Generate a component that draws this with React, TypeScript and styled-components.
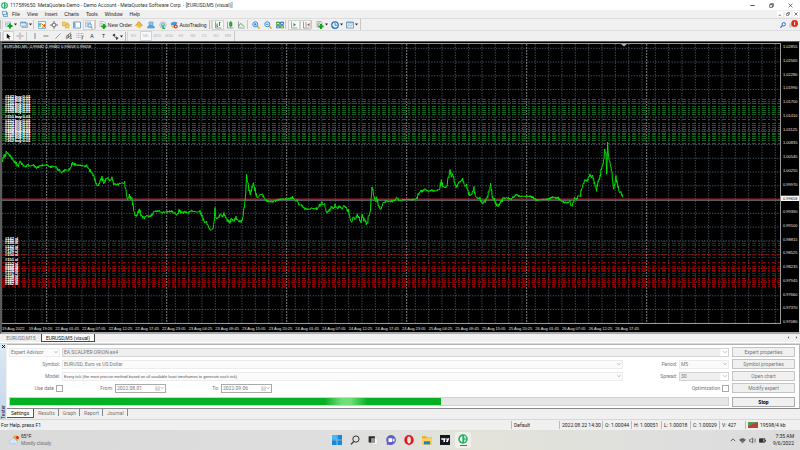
import React, { ReactNode } from 'react';
import styled, { createGlobalStyle, css } from 'styled-components';

const GlobalStyle = createGlobalStyle`
  *, *::before, *::after { box-sizing: border-box; }
  body { margin: 0; background: #f0f0f0; }
  button, input, select { font: inherit; color: inherit; margin: 0; }
`;

const ui = `'Liberation Sans', Arial, sans-serif`;
const panelFont = `Roboto, 'Liberation Sans', sans-serif`;

const App_ = styled.div`
  display: flex;
  flex-direction: column;
  min-height: 100vh;
  background: #f0f0f0;
  color: #222;
  font: 5px/6px ${ui};
`;

/* ---------- window chrome ---------- */
const TitleBar = styled.header`
  display: flex;
  align-items: center;
  height: 10px;
  padding-left: 1px;
  background: #fff;
  gap: 2px;
`;
const TitleText = styled.h1`
  flex: 1;
  margin: 0;
  font: inherit;
  font-family: ${panelFont};
  color: #333;
`;
const PlainButton = styled.button<{ $w?: number; $h?: number }>`
  display: flex;
  align-items: center;
  justify-content: center;
  width: ${(p) => p.$w ?? 12}px;
  height: ${(p) => p.$h ?? 8}px;
  padding: 0;
  border: 0;
  background: none;
`;
const WindowButtons = styled.div`
  display: flex;
  gap: 7px;
  padding-right: 4px;
`;
const MenuBar = styled.nav`
  display: flex;
  align-items: center;
  height: 8px;
  padding-left: 2px;
`;
const MenuItem = styled.button`
  padding: 0 3px;
  border: 0;
  background: none;
  white-space: nowrap;
`;
const MenuItems = styled.div`
  display: flex;
  flex: 1;
  margin-left: 1px;
  gap: 1px;
`;
const ChildButtons = styled.div`
  display: flex;
  gap: 2px;
  padding-right: 1px;
  & > button { background: #fff; }
`;

/* ---------- toolbars ---------- */
const ToolRow = styled.div<{ $h: number }>`
  display: flex;
  align-items: stretch;
  height: ${(p) => p.$h}px;
  border-top: 1px solid #dcdcdc;
`;
const ToolGroup = styled.div`
  display: flex;
  align-items: center;
  border-right: 1px solid #c8c8c8;
`;
const Grip = styled.span`
  width: 3px;
  height: 9px;
  border-left: 1px solid #bbb;
  border-right: 1px solid #d4d4d4;
`;
const Separator = styled.span`
  width: 3px;
  height: 9px;
  border-left: 1px solid #c8c8c8;
`;
const Tool = styled.button<{ $w?: number; $on?: boolean; $muted?: boolean }>`
  display: flex;
  align-items: center;
  justify-content: center;
  gap: 1px;
  width: ${(p) => p.$w ?? 12}px;
  height: 10px;
  padding: 0;
  border: 1px solid ${(p) => (p.$on ? '#d2d2d2' : 'transparent')};
  background: ${(p) => (p.$on ? '#f8f8f8' : 'none')};
  color: ${(p) => (p.$muted ? '#b4b4b4' : '#222')};
  white-space: nowrap;
  flex: none;
`;
const Frames = styled.div`
  display: grid;
  grid-template-columns: repeat(9, 1fr);
  width: 106px;
  font-size: 4px;
  & > button { width: auto; }
`;
const ToolEnd = styled.div`
  display: flex;
  align-items: center;
  gap: 2px;
  margin-left: auto;
  padding-right: 2px;
`;

/* ---------- chart ---------- */
const ChartPane = styled.section`
  display: flex;
  flex-direction: column;
  height: 293px;
  padding: 1px 0 0;
  border: solid #5c5c5c;
  border-width: 1px 1px 2px 2px;
  border-bottom-color: #a8a8a8;
  border-right-color: #d8d8d8;
  background: #000;
  color: #e4e4e4;
  font-size: 4px;
  line-height: 6px;
`;
const ChartTop = styled.div`
  display: flex;
  height: 281px;
`;
const Plot = styled.div`
  position: relative;
  flex: 1;
  min-width: 0;
  border: solid #9a9a9a;
  border-width: 1px 1px 1px 0;
  & > svg { display: block; width: 100%; height: 100%; }
`;
const PlotCaption = styled.p`
  position: absolute;
  left: 2px;
  top: 0;
  margin: 0;
  color: #fff;
  white-space: pre;
`;
const OrderLabel = styled.span<{ $y: number }>`
  position: absolute;
  left: 3px;
  top: ${(p) => p.$y}px;
  color: #fff;
  text-shadow: 0 0 0 #fff;
  white-space: nowrap;
`;
const PriceAxis = styled.ol`
  position: relative;
  display: flex;
  flex-direction: column;
  justify-content: space-between;
  width: 18px;
  height: 281px;
  margin: 1px 0 0;
  padding: 0 0 0 2px;
  list-style: none;
`;
const Price = styled.li<{ $current?: boolean }>`
  height: 6px;
  ${(p) =>
    p.$current &&
    css`
      margin: 0 0 0 -2px;
      padding-left: 2px;
      border-top: 1px solid #f00;
      background: #fff;
      color: #000;
      line-height: 5px;
    `}
`;
const TimeAxis = styled.ol`
  display: grid;
  grid-template-columns: repeat(24, 80fr) 414fr;
  margin: 2px 19px 0 0;
  padding: 0;
  list-style: none;
  & > li { white-space: nowrap; width: 0; }
`;
const ChartTabs = styled.nav`
  display: flex;
  align-items: stretch;
  height: 9px;
  padding-left: 1px;
  border-bottom: 1px solid #fff;
  font-family: ${panelFont};
`;
const ChartTab = styled.button<{ $active?: boolean }>`
  width: ${(p) => (p.$active ? 54 : 40)}px;
  padding: 0;
  border: solid ${(p) => (p.$active ? '#444' : 'transparent')};
  border-width: 0 1px 1px;
  background: ${(p) => (p.$active ? '#fff' : 'none')};
  color: ${(p) => (p.$active ? '#111' : '#777')};
`;
const TabArrows = styled.div`
  display: flex;
  margin-left: auto;
  color: #666;
`;

/* ---------- tester ---------- */
const Tester = styled.section`
  display: flex;
  height: 76px;
  border-top: 1px solid #d8d8d8;
  font-family: ${panelFont};
  color: #777;
`;
const TesterSide = styled.aside`
  display: flex;
  flex-direction: column;
  align-items: center;
  width: 6px;
  background: linear-gradient(#dce8f2, #c4d8ea);
  color: #223;
`;
const SideLabel = styled.span`
  margin-top: auto;
  writing-mode: vertical-rl;
  transform: rotate(180deg);
  line-height: 6px;
`;
const TesterMain = styled.div`
  display: flex;
  flex-direction: column;
  flex: 1;
  min-width: 0;
  margin-left: 1px;
`;
const TesterForm = styled.form`
  display: grid;
  grid-template-columns: minmax(0, 1fr) 63px;
  grid-auto-rows: 10px;
  row-gap: 2px;
  column-gap: 3px;
  height: 65px;
  padding: 2px 4px 0 2px;
  border: solid #b4b4b4;
  border-width: 1px 1px 1px 0;
  border-bottom-color: #888;
  background: #fff;
`;
const FormRow = styled.div`
  display: flex;
  align-items: center;
  min-width: 0;
`;
const Label = styled.label<{ $w: number }>`
  width: ${(p) => p.$w}px;
  flex: none;
  padding-right: 2px;
  text-align: right;
  white-space: nowrap;
`;
const SelectBox = styled.span<{ $w?: number; $gray?: boolean; $gap?: number; $small?: boolean }>`
  display: flex;
  align-items: center;
  ${(p) => (p.$w ? `width: ${p.$w}px; flex: none;` : 'flex: 1; min-width: 0;')}
  height: 9px;
  margin-right: ${(p) => p.$gap ?? 0}px;
  padding-right: 1px;
  border: 1px solid ${(p) => (p.$gray ? '#d4d4d4' : '#ececec')};
  background: ${(p) => (p.$gray ? 'linear-gradient(90deg, #efefef calc(100% - 8px), #fff 0)' : '#fbfbfb')};
  ${(p) => p.$small && `font-family: ${ui}; font-size: 4px; color: #555;`}
  & > select {
    flex: 1;
    min-width: 0;
    height: 7px;
    padding: 0 1px;
    border: 0;
    background: none;
    appearance: none;
    line-height: 7px;
  }
`;
const Check = styled.input`
  appearance: none;
  flex: none;
  width: 7px;
  height: 7px;
  border: 1px solid #aaa;
  background: #fff;
`;
const DateBox = styled.span`
  display: flex;
  align-items: center;
  flex: none;
  width: 51px;
  height: 9px;
  border: 1px solid #aaa;
  & > input {
    flex: 1;
    min-width: 0;
    height: 7px;
    padding: 0 1px;
    border: 0;
    background: none;
  }
`;
const Spring = styled.span`
  flex: 1;
`;
const FormButton = styled.button<{ $strong?: boolean }>`
  height: 10px;
  padding: 0;
  border: 1px solid #c4c4c4;
  background: #f0f0f0;
  ${(p) => p.$strong && 'color: #000; font-weight: 700; border-color: #aaa;'}
`;
const ProgressRow = styled.div`
  display: contents;
  & > * { margin-top: 2px; }
`;
const Track = styled.div`
  height: 9px;
  border: 1px solid #d0d0d0;
  background: #e6e6e6;
`;
const Bar = styled.div`
  width: 60%;
  height: 7px;
  background: linear-gradient(90deg, #06b025 73%, #70df7a 77%, #70df7a 79%, #06b025 83%);
`;
const TesterTabs = styled.nav`
  display: flex;
  height: 9px;
`;
const TesterTab = styled.button<{ $active?: boolean }>`
  height: 7px;
  margin-left: 1px;
  padding: 0 3px;
  border: 0;
  border-right: 1px solid #888;
  background: none;
  ${(p) =>
    p.$active &&
    `height: 9px; margin: 0; padding: 0 4px; background: #fff; color: #111;
     border: solid #555; border-width: 0 1px 1px 0;`}
`;

/* ---------- status ---------- */
const StatusBar = styled.footer`
  display: flex;
  align-items: center;
  height: 11px;
  border-top: 1px solid #d8d8d8;
  padding-left: 1px;
  font-family: ${panelFont};
`;
const StatusCell = styled.span<{ $w: number }>`
  display: flex;
  align-items: center;
  gap: 2px;
  width: ${(p) => p.$w}px;
  height: 8px;
  padding-left: 2px;
  border-left: 1px solid #bbb;
  white-space: nowrap;
`;

/* ---------- taskbar ---------- */
const Taskbar = styled.footer`
  display: grid;
  grid-template-columns: 1fr auto 1fr;
  align-items: center;
  height: 20px;
  background: linear-gradient(90deg, #dadada, #dedede 40%, #e3e3da 60%, #dedede 85%, #dcdcdc);
`;
const Weather = styled.button`
  display: flex;
  align-items: center;
  gap: 2px;
  padding: 0 0 0 9px;
  border: 0;
  background: none;
  text-align: left;
`;
const Stack = styled.span`
  display: flex;
  flex-direction: column;
  line-height: 7px;
  & > small { font-size: 5px; color: #666; }
`;
const Dock = styled.div`
  display: flex;
  gap: 2px;
`;
const DockItem = styled.button<{ $active?: boolean }>`
  display: flex;
  flex-direction: column;
  align-items: center;
  justify-content: center;
  width: 16px;
  height: 16px;
  padding: 0;
  border: 0;
  border-radius: 2px;
  background: ${(p) => (p.$active ? '#f0f0ea' : 'none')};
  ${(p) =>
    p.$active &&
    css`
      &::after {
        content: '';
        width: 7px;
        height: 1px;
        margin-top: 1px;
        background: #2a7f8c;
      }
    `}
`;
const Tray = styled.div`
  display: flex;
  align-items: center;
  justify-content: flex-end;
  gap: 3px;
  padding-right: 6px;
`;
const Clock = styled.time`
  width: 25px;
  text-align: right;
  line-height: 7px;
  font-family: ${panelFont};
`;

/* ---------- icons ---------- */
const Ico = ({ s = 8, children }: { s?: number; children: ReactNode }) => (
  <svg width={s} height={s} viewBox="0 0 16 16" fill="none" aria-hidden="true">
    {children}
  </svg>
);
const Caret = () => (
  <svg width="3" height="3" viewBox="0 0 6 6" aria-hidden="true"><path d="M0 1h6L3 5z" fill="#222" /></svg>
);
const Chevron = () => (
  <svg width="4" height="4" viewBox="0 0 8 8" fill="none" aria-hidden="true"><path d="M1 2.5 4 5.5 7 2.5" stroke="#999" strokeWidth="1.4" /></svg>
);
const Plus = ({ x = 11, y = 11 }: { x?: number; y?: number }) => (
  <path d={`M${x} ${y - 5}v10M${x - 5} ${y}h10`} stroke="#12a512" strokeWidth="4" />
);
const MetaLogo = ({ s = 8 }: { s?: number }) => (
  <Ico s={s}>
    <circle cx="8" cy="8" r="7.6" fill="#1fae62" />
    <path d="M7 3C4 4 3 6 3 8s1 4 4 5z M10 2.5v11c2-1 3-3 3-5.500s-1-4.500-3-5.500z" fill="#fff" />
    <path d="M10 6h2v4h-2z" fill="#1fae62" />
  </Ico>
);
const Lens = ({ minus }: { minus?: boolean }) => (
  <Ico>
    <path d="m10 10 5 5" stroke="#d8a520" strokeWidth="3" />
    <circle cx="6.500" cy="6.500" r="5" fill="#dcefff" stroke="#3a8ede" strokeWidth="2" />
    <path d={minus ? 'M4 6.500h5' : 'M4 6.500h5M6.500 4v5'} stroke="#2060b0" strokeWidth="1.500" />
  </Ico>
);
const icons = {
  newChart: <Ico><path d="M1 2h10v9H1z" fill="#eef4fa" stroke="#7f9fb8" /><path d="M3 8V5m2 2V4m3 3V3" stroke="#4a8" /><Plus x={10} y={10} /></Ico>,
  profiles: <Ico><path d="M4 4h11v9H4z" fill="#bcd8ee" stroke="#5b88ad" /><path d="M1 2h11v8H1z" fill="#e8f2fa" stroke="#5b88ad" /><path d="M1 3.500h11" stroke="#4d8cc4" strokeWidth="2" /></Ico>,
  market: <Ico><path d="M1 1h14v14H1z" fill="#f7fbff" stroke="#5aa0d8" strokeWidth="1.500" /><path d="M4 12V5l-2 2m2-2 2 2" stroke="#1fa51f" strokeWidth="2" /><path d="m7 5 6 6m0-5v6H8" stroke="#e06a20" strokeWidth="2" /></Ico>,
  crosshair: <Ico><circle cx="8" cy="8" r="4" stroke="#666" strokeWidth="1.500" /><path d="M8 0v6m0 4v6M0 8h6m4 0h6" stroke="#555" strokeWidth="1.500" /></Ico>,
  navigator: <Ico><path d="M1 2h5l1 2h5v6H1z" fill="#f7d35c" stroke="#c79a20" /><path d="m10.500 5 1.500 3 3.500.4-2.400 2.400.6 3.700-3.200-1.700-3.200 1.700.6-3.700-2.400-2.400L9 8z" fill="#ffe04a" stroke="#c08a10" /></Ico>,
  terminal: <Ico><path d="M1 2h14v12H1z" fill="#fff" stroke="#4d86b8" strokeWidth="1.500" /><path d="M2 3h3v10H2z" fill="#6fa8d8" /></Ico>,
  tester: <Ico><path d="M1 2h10v10H1z" fill="#e5eff8" stroke="#7796b0" /><path d="M3 5h6M3 8h4" stroke="#889" /><circle cx="9.500" cy="9" r="3.500" fill="#d7ecff" stroke="#4a88c0" strokeWidth="1.500" /><path d="m12 12 3 3" stroke="#d09c20" strokeWidth="2.500" /></Ico>,
  order: <Ico><path d="M2 1h8l3 3v7H2z" fill="#f5f8fb" stroke="#889" /><path d="M4 5h5M4 8h3" stroke="#789" /><Plus x={10} y={11} /></Ico>,
  editor: <Ico><path d="M8 1 15 9l-6 5-8-5z" fill="#f3bd2c" stroke="#bf8410" strokeWidth="1.200" /><path d="m2 9 7 5 5-4" stroke="#fff0a0" strokeWidth="1.500" /></Ico>,
  community: <Ico><path d="M4 2h8v7H4z" fill="#8fc6f2" stroke="#3c84c6" /><path d="M1 14c0-4 3-5 7-5s7 1 7 5z" fill="#5da6e2" stroke="#3c84c6" /></Ico>,
  signals: <Ico><circle cx="8" cy="8" r="6.500" stroke="#9cb8cc" strokeWidth="1.500" /><circle cx="8" cy="8" r="3.500" stroke="#4d9cd0" strokeWidth="1.500" /><path d="M8 7v8h4" stroke="#2faa3c" strokeWidth="2.500" /></Ico>,
  auto: <Ico><path d="M1 6c2-5 11-6 14-2l-3 4H3z" fill="#4a9ad8" /><path d="M2 8h9l-2 6-6-1z" fill="#f2c23a" /><circle cx="11.500" cy="11" r="4" fill="#e02818" /><path d="M10 9.500h3v3h-3z" fill="#fff" /></Ico>,
  bars: <Ico><path d="M3 1v13h12" stroke="#666" strokeWidth="1.300" /><path d="M6 5v7m0-1h2M11 2v8m0-7h2" stroke="#1b9b2e" strokeWidth="2" /></Ico>,
  candles: <Ico><path d="M3 1v13h12" stroke="#777" strokeWidth="1.300" /><path d="M9.500 0v13" stroke="#157f25" strokeWidth="1.500" /><path d="M7 3h5v7H7z" fill="#25b53a" stroke="#157f25" /></Ico>,
  line: <Ico><path d="M3 1v13h12" stroke="#777" strokeWidth="1.300" /><path d="M3 11 7 5l4 3 4 3" stroke="#2ca83c" strokeWidth="1.600" /></Ico>,
  tiles: <Ico><path d="M1 2h6v5H1zM9 9h6v5H9z" fill="#4bb13f" stroke="#26762a" /><path d="M9 2h6v5H9zM1 9h6v5H1z" fill="#3d8fe0" stroke="#1d4f92" /><path d="M2 5h4M10 5h4M2 12h4m4 0h4" stroke="#fff" strokeWidth="1.500" /></Ico>,
  scroll: <Ico><path d="M3 1v13h12" stroke="#777" strokeWidth="1.300" /><path d="m7 4 5 3.500L7 11z" fill="#23a337" /></Ico>,
  shift: <Ico><path d="M3 1v13h12M8 2v10" stroke="#667" strokeWidth="1.300" /><path d="m15 4-5 3.500 5 3.500z" fill="#d2592a" /></Ico>,
  indicators: <Ico><path d="M2 1h8l2 3v8H2z" fill="#e2e8ec" stroke="#778" /><path d="M4 9c1-6 4-6 4-4" stroke="#555" /><Plus x={10} y={11} /></Ico>,
  periods: <Ico><circle cx="8" cy="8" r="6.500" fill="#eef6fd" stroke="#1f72c4" strokeWidth="2.500" /><path d="M8 4v4.500h4" stroke="#345" strokeWidth="1.300" /></Ico>,
  templates: <Ico><path d="M1 2h14v12H1z" fill="#e7f1f9" stroke="#5487b1" strokeWidth="1.500" /><path d="M1 3.500h14" stroke="#5a9bd0" strokeWidth="2" /><path d="m3 11 3-4 3 3 4-3" stroke="#667" /></Ico>,
  cursor: <Ico s={7}><path d="M4 1v12l3-3 2 5 2-1-2-5h4z" fill="#111" /></Ico>,
  cross: <Ico><path d="M8 1v6m0 2v6M1 8h6m2 0h6" stroke="#777" strokeWidth="1.300" /></Ico>,
  vline: <Ico><path d="M8 2v12" stroke="#666" strokeWidth="1.500" /></Ico>,
  hline: <Ico><path d="M3 8h10" stroke="#555" strokeWidth="1.500" /></Ico>,
  trend: <Ico><path d="M3 13 13 3" stroke="#666" strokeWidth="1.300" /></Ico>,
  channel: <Ico><path d="M1 10 12 1M2 14 14 5M4 7v6m3-8v7m4-9v6M9 10h5m-5 3h5" stroke="#444" strokeWidth="1.200" /></Ico>,
  fibo: <Ico><path d="M1 3h14M1 7h14M1 11h9" stroke="#888" strokeDasharray="2 1" strokeWidth="1.200" /><path d="M12 9v6m0-6h3m-3 3h2" stroke="#555" strokeWidth="1.300" /></Ico>,
  arrows: <Ico s={7}><path d="m1 5 4-4 3 4-3 3z" fill="#333" /><path d="m5 8 5 3m0-2 4 3-4 3z" stroke="#333" fill="#333" strokeWidth="1.500" /></Ico>,
};

type ToolDef = { id: string; icon?: ReactNode; text?: string; w?: number; on?: boolean; caret?: boolean; sep?: boolean };
const mainTools: ToolDef[] = [
  { id: 'New chart', icon: icons.newChart, w: 15, caret: true },
  { id: 'Profiles', icon: icons.profiles, w: 15, caret: true },
  { id: 's1', sep: true },
  { id: 'Market watch', icon: icons.market },
  { id: 'Data window', icon: icons.crosshair },
  { id: 'Navigator', icon: icons.navigator, w: 11 },
  { id: 'Terminal', icon: icons.terminal },
  { id: 'Strategy tester', icon: icons.tester, on: true },
  { id: 's2', sep: true },
  { id: 'New Order', icon: icons.order, text: 'New Order', w: 35 },
  { id: 'MetaEditor', icon: icons.editor },
  { id: 'Community', icon: icons.community },
  { id: 'Signals', icon: icons.signals, w: 11 },
  { id: 'AutoTrading', icon: icons.auto, text: 'AutoTrading', w: 41 },
];
const chartTools: ToolDef[] = [
  { id: 'Bar chart', icon: icons.bars, on: true },
  { id: 'Candlesticks', icon: icons.candles, w: 11 },
  { id: 'Line chart', icon: icons.line },
  { id: 's1', sep: true },
  { id: 'Zoom in', icon: <Lens /> },
  { id: 'Zoom out', icon: <Lens minus /> },
  { id: 'Tile windows', icon: icons.tiles, w: 11 },
  { id: 's2', sep: true },
  { id: 'Auto scroll', icon: icons.scroll, on: true },
  { id: 'Chart shift', icon: icons.shift, w: 11, on: true },
  { id: 's3', sep: true },
  { id: 'Indicators', icon: icons.indicators, w: 15, caret: true },
  { id: 'Periods', icon: icons.periods, w: 15, caret: true },
  { id: 'Templates', icon: icons.templates, w: 16, caret: true },
];
const drawTools: ToolDef[] = [
  { id: 'Cursor', icon: icons.cursor, w: 11, on: true },
  { id: 'Crosshair', icon: icons.cross },
  { id: 's1', sep: true },
  { id: 'Vertical line', icon: icons.vline, w: 11 },
  { id: 'Horizontal line', icon: icons.hline },
  { id: 'Trendline', icon: icons.trend, w: 11 },
  { id: 'Channel', icon: icons.channel, w: 11 },
  { id: 'Fibonacci', icon: icons.fibo },
  { id: 'Text', text: 'A' },
  { id: 'Text label', text: 'T', w: 11 },
  { id: 'Arrows', icon: icons.arrows, w: 16, caret: true },
];
const Tools = ({ items }: { items: ToolDef[] }) => (
  <>
    {items.map((t) =>
      t.sep ? (
        <Separator key={t.id} />
      ) : (
        <Tool key={t.id} $w={t.w} $on={t.on} aria-label={t.id} aria-pressed={!!t.on}>
          {t.icon}
          {t.text}
          {t.caret && <Caret />}
        </Tool>
      ),
    )}
  </>
);

/* ---------- chart data: [offset x, offset y, x/y pairs at triple scale] ---------- */
const raw: [number, number, number[]][] = [
  [0, 85, [6,222,20,200,24,203,30,210,38,222,46,230,54,240,60,226,68,236,75,243,82,236,90,240,100,238,108,246,118,241,130,237,142,238,150,243,160,241,170,245,180,256,188,260,196,252,205,252,212,246,218,231,228,237,240,238,250,240,260,241,268,252,275,260,282,272,290,295,294,302,300,285,306,276,312,290,318,280,324,275,330,285,336,277,342,293,350,297,358,293,366,292,374,290,378,315,382,340,388,330,396,343,400,365,404,388,410,390,414,380,418,372,424,388,432,396,440,390,448,392,454,388,462,377,475,375,485,380,500,378,515,376,525,382,533,388,538,371,545,382,555,378,565,380,575,375,590,378,600,378,608,395,612,408,620,410,625,422,630,432,638,430,642,410,645,372,648,395,655,398,662,385,668,392,672,385,680,400,688,410,695,398,702,405,708,395,715,405,722,408,728,398,732,370,736,340,740,272,745,300,750,330,756,305,760,292]],
  [200, 80, [166,330,172,352,180,342,188,340,195,355,205,362,215,362,225,360,235,356,250,354,262,354,277,350,285,358,292,360,298,372,305,372,312,382,320,385,335,382,345,385,355,380,366,366,374,374,380,395,388,390,395,378,402,385,405,372,412,385,418,375,425,385,432,375,440,385,446,392,450,415,455,425,460,408,466,415,472,402,478,412,482,428,487,405,494,420,502,430,506,405,510,400,513,360,516,318,522,345,526,360,530,352,536,372,542,385,550,365,560,360,570,363,585,357,590,350,600,360,608,357,620,356,635,356,645,355]],
  [400, 80, [50,355,55,340,62,332,75,325,85,332,95,328,108,330,118,325,124,302,130,318,140,320,145,290,150,266,154,290,158,278,164,305,170,318,176,305,182,300,188,298,194,315,200,312,204,335,214,345,222,322,226,345,232,352,240,352,247,368,255,362,262,350,268,325,272,315,278,350,284,358,292,378,300,368,310,352,320,350,330,355,340,348,350,342,360,346,375,346,390,346,400,350,415,358,430,355,445,355,460,349,475,352,485,360,500,366,510,362,515,380,520,365,524,350,530,356,535,345,540,348,543,330,550,312,555,298,562,300,566,288,570,282,578,290,584,308,588,328,594,305,600,290,603,270,608,255,612,240,614,208,618,220,620,285,623,185,626,230,630,250,636,275,640,325,648,288,652,312,658,335,663,335,668,350,670,356]],
];
const PLOT_X = 2;
const PLOT_Y = 43;
const anchors = raw.flatMap(([ox, oy, v]) => {
  const out: [number, number][] = [];
  for (let i = 0; i < v.length; i += 2) out.push([ox + v[i] / 3 - PLOT_X, oy + v[i + 1] / 3 - PLOT_Y]);
  return out;
});
const pricePath = (() => {
  let seed = 7;
  const rnd = () => ((seed = (seed * 16807) % 2147483647) / 2147483647);
  const pts: string[] = [];
  for (let i = 1; i < anchors.length; i++) {
    const [x0, y0] = anchors[i - 1];
    const [x1, y1] = anchors[i];
    const n = Math.max(1, Math.round((x1 - x0) / 0.5));
    const amp = Math.min(3, 0.8 + Math.abs(y1 - y0) * 0.3);
    for (let k = 0; k < n; k++) {
      const y = y0 + ((y1 - y0) * k) / n + (k % 2 ? 1 : -1) * rnd() * amp;
      pts.push(`${(x0 + ((x1 - x0) * k) / n).toFixed(2)} ${y.toFixed(2)}`);
    }
  }
  return 'M' + pts.join('L');
})();

const buyLevels = [98, 100, 102, 105, 107, 109, 111, 113, 118, 122, 124, 126, 128, 130, 132, 133, 135, 137, 139, 142];
const stopLevels = [240, 242, 244, 248, 250, 253, 256, 261, 265, 267, 269, 270, 272, 274, 277, 279, 281, 283, 285];
const ticket = (i: number, shift: number) => (i === 0 ? 142 : 142 + shift + i);
const grid = (n: number) => Array.from({ length: n }, (_, i) => i);
const daySeparators = [46.7, 166.7, 286.7, 406.7, 526.7, 646.7];

const prices = ['1.02855','1.02565','1.02280','1.01990','1.01700','1.01410','1.01125','1.00835','1.00545','1.00255','0.99970','0.99658','0.99390','0.99100','0.98815','0.98525','0.98235','0.97945','0.97660','0.97370','0.97080'];
const times = ['19 Aug 2022','19 Aug 19:20','22 Aug 01:45','22 Aug 07:05','22 Aug 12:25','22 Aug 17:45','22 Aug 23:05','23 Aug 04:25','23 Aug 09:45','23 Aug 15:05','23 Aug 20:25','24 Aug 01:45','24 Aug 07:05','24 Aug 12:25','24 Aug 17:45','24 Aug 23:05','25 Aug 04:25','25 Aug 09:45','25 Aug 15:05','25 Aug 20:25','26 Aug 01:45','26 Aug 07:05','26 Aug 12:25','26 Aug 17:45'];

const Chart = () => (
  <ChartPane aria-label="EURUSD chart">
    <ChartTop>
      <Plot>
        <svg viewBox="0 0 778 279" preserveAspectRatio="none" role="img" aria-label="EURUSD M5 price">
          {grid(21).map((i) => (
            <path key={i} d={`M0 ${4.300 + i * 13.75}H778`} stroke="#505c69" strokeDasharray="1.300 1.400" strokeWidth="0.9" />
          ))}
          {grid(59).map((i) => (
            <path key={i} d={`M${i * 13.333} 0V279`} stroke="#505c69" strokeDasharray="1.300 1.400" strokeWidth="0.9" />
          ))}
          {daySeparators.map((x) => (
            <path key={x} d={`M${x - PLOT_X} 0V279`} stroke="#909090" strokeDasharray="2 1" strokeWidth="0.9" />
          ))}
          {buyLevels.map((y) => (
            <path key={y} d={`M0 ${y - PLOT_Y + 0.5}H778`} stroke="#0e6416" strokeDasharray="4 2 2 2" />
          ))}
          {stopLevels.map((y) => (
            <path key={y} d={`M0 ${y - PLOT_Y + 0.5}H778`} stroke="#860000" strokeDasharray="4 2 2 2" />
          ))}
          <path d="M0 156.500H778" stroke="#565c64" />
          <path d="M0 155.300H778" stroke="#b01822" strokeWidth="1.500" />
          <path d={pricePath} stroke="#00e400" strokeWidth="1" fill="none" />
          <path d="M619 0h6l-3 2.500z" fill="#9fb4c4" />
        </svg>
        <PlotCaption>{'EURUSD,M5  0.99682 0.99682 0.99658 0.99658'}</PlotCaption>
        {buyLevels.map((y, i) => (
          <OrderLabel key={y} $y={y - PLOT_Y - 5}>{`#${ticket(i, 1)} buy 0.01`}</OrderLabel>
        ))}
        {stopLevels.map((y, i) => (
          <OrderLabel key={y} $y={y - PLOT_Y - 5}>{`#${ticket(i, 2)} sl`}</OrderLabel>
        ))}
      </Plot>
      <PriceAxis>
        {prices.map((p) => (
          <Price key={p} $current={p === '0.99658'}>{p}</Price>
        ))}
      </PriceAxis>
    </ChartTop>
    <TimeAxis>
      {times.map((t) => (
        <li key={t}>{t}</li>
      ))}
    </TimeAxis>
  </ChartPane>
);

type SelectProps = { id: string; value: string; w?: number; gray?: boolean; gap?: number; small?: boolean };
const Select = ({ id, value, w, gray, gap, small }: SelectProps) => (
  <SelectBox $w={w} $gray={gray} $gap={gap} $small={small}>
    <select id={id} aria-label={id} defaultValue={value}>
      <option>{value}</option>
    </select>
    <Chevron />
  </SelectBox>
);
const DateField = ({ id, value }: { id: string; value: string }) => (
  <DateBox>
    <input id={id} type="text" defaultValue={value} />
    <PlainButton type="button" aria-label="Open calendar" $w={11} $h={7}>
      <Ico s={5}><path d="M1 2h14v12H1zM1 6h14M5 6v8m5-8v8M1 10h14" stroke="#aaa" strokeWidth="1.200" /></Ico>
      <Chevron />
    </PlainButton>
  </DateBox>
);

const TesterPanel = () => (
  <Tester aria-label="Strategy tester">
    <TesterSide>
      <PlainButton aria-label="Close tester" $w={5} $h={4}>
        <svg width="3" height="3" viewBox="0 0 6 6"><path d="m0 0 6 6M6 0 0 6" stroke="#111" strokeWidth="2" /></svg>
      </PlainButton>
      <SideLabel>Tester</SideLabel>
    </TesterSide>
    <TesterMain>
      <TesterForm onSubmit={(e) => e.preventDefault()}>
        <FormRow>
          <Select id="Program type" value="Expert Advisor" w={51} gap={2} />
          <Select id="Expert" value="EA SCALPER ORION.ex4" gray />
        </FormRow>
        <FormButton type="button">Expert properties</FormButton>
        <FormRow>
          <Label $w={53} htmlFor="Symbol">Symbol:</Label>
          <Select id="Symbol" value="EURUSD, Euro vs US Dollar" />
          <Label $w={56} htmlFor="Period">Period:</Label>
          <Select id="Period" value="M5" w={50} />
        </FormRow>
        <FormButton type="button">Symbol properties</FormButton>
        <FormRow>
          <Label $w={53} htmlFor="Model">Model:</Label>
          <Select id="Model" value="Every tick (the most precise method based on all available least timeframes to generate each tick)" small />
          <Label $w={56} htmlFor="Spread">Spread:</Label>
          <Select id="Spread" value="30" w={50} gray />
        </FormRow>
        <FormButton type="button">Open chart</FormButton>
        <FormRow>
          <Label $w={47} htmlFor="use-date">Use date</Label>
          <Check type="checkbox" id="use-date" />
          <Label $w={52} htmlFor="from">From:</Label>
          <DateField id="from" value="2022.08.01" />
          <Label $w={55} htmlFor="to">To:</Label>
          <DateField id="to" value="2022.09.06" />
          <Spring />
          <Label $w={40} htmlFor="optimization">Optimization</Label>
          <Check type="checkbox" id="optimization" />
        </FormRow>
        <FormButton type="button">Modify expert</FormButton>
        <ProgressRow>
          <Track role="progressbar" aria-valuenow={60} aria-label="Test progress"><Bar /></Track>
          <FormButton type="button" $strong>Stop</FormButton>
        </ProgressRow>
      </TesterForm>
      <TesterTabs>
        {['Settings', 'Results', 'Graph', 'Report', 'Journal'].map((t, i) => (
          <TesterTab key={t} $active={i === 0}>{t}</TesterTab>
        ))}
      </TesterTabs>
    </TesterMain>
  </Tester>
);

const dock: { id: string; icon: ReactNode; active?: boolean }[] = [
  { id: 'Start', icon: <Ico s={10}><path d="M0 0h7.500v7.500H0zM8.500 0H16v7.500H8.500zM0 8.500h7.500V16H0zM8.500 8.500H16V16H8.500z" fill="#1688dc" /><path d="M0 0h7.500v7.500H0z" fill="#4cb8f0" /></Ico> },
  { id: 'Search', icon: <Ico s={10}><circle cx="9.500" cy="6.500" r="5" stroke="#333" strokeWidth="1.600" /><path d="m6 10.500-4.500 4.500" stroke="#333" strokeWidth="2" /></Ico> },
  { id: 'Task view', icon: <Ico s={10}><path d="M5 5h10v10H5z" fill="#fafafa" stroke="#ccc" /><path d="M1 2h10v10H1z" fill="#2b2b2b" /><path d="M5 5h6v7H5z" fill="#9a9a9a" /></Ico> },
  { id: 'Chat', icon: <Ico s={10}><path d="M8 0a8 8 0 1 1-4 15l-3 1 .5-4A8 8 0 0 1 8 0z" fill="#5b5fc7" /><path d="M4 5h6v6H4zM11 7l2.500-2v6L11 9z" fill="#fff" /></Ico> },
  { id: 'Opera', icon: <Ico s={10}><ellipse cx="8" cy="8" rx="7.500" ry="8" fill="#e8131f" /><ellipse cx="8" cy="8" rx="3" ry="5.500" fill="#e8e8e2" /></Ico> },
  { id: 'Explorer', icon: <Ico s={10}><path d="M0 2h6l2 2h8v11H0z" fill="#e9a91a" /><path d="M0 5h16v10H0z" fill="#ffd35a" /><path d="M3 10h10v5H3z" fill="#1f7fd0" /></Ico> },
  { id: 'TradingView', icon: <Ico s={10}><path d="M0 0h16v16H0z" fill="#131722" /><path d="M2 5h6v6H5.500V7.500H2zM12 5h3l-2.500 6h-3z" fill="#fff" /><circle cx="9.800" cy="6.300" r="1.300" fill="#fff" /></Ico> },
  { id: 'MetaTrader', icon: <MetaLogo s={10} />, active: true },
];

export default function App() {
  return (
    <App_>
      <GlobalStyle />
      <TitleBar>
        <MetaLogo s={7} />
        <TitleText>117589650: MetaQuotes-Demo - Demo Account - MetaQuotes Software Corp. - [EURUSD,M5 (visual)]</TitleText>
        <WindowButtons>
          <PlainButton aria-label="Minimize"><Ico s={5}><path d="M1 8h14" stroke="#222" strokeWidth="2.500" /></Ico></PlainButton>
          <PlainButton aria-label="Restore"><Ico s={5}><path d="M2 5h9v9H2zM5 5V2h9v9h-3" stroke="#222" strokeWidth="2" /></Ico></PlainButton>
          <PlainButton aria-label="Close"><Ico s={5}><path d="m2 2 12 12M14 2 2 14" stroke="#222" strokeWidth="2" /></Ico></PlainButton>
        </WindowButtons>
      </TitleBar>
      <MenuBar>
        <Ico s={6}><path d="M4 5h11v10H4z" fill="#cfe3f5" stroke="#4c88bd" strokeWidth="2" /><path d="M1 1h11v8H1z" fill="#eaf3fb" stroke="#4c88bd" strokeWidth="2" /></Ico>
        <MenuItems>
          {['File', 'View', 'Insert', 'Charts', 'Tools', 'Window', 'Help'].map((m) => (
            <MenuItem key={m}>{m}</MenuItem>
          ))}
        </MenuItems>
        <ChildButtons>
          <PlainButton aria-label="Minimize chart" $w={6} $h={6}><Ico s={4}><path d="M2 13h10" stroke="#556" strokeWidth="3" /></Ico></PlainButton>
          <PlainButton aria-label="Restore chart" $w={6} $h={6}><Ico s={4}><path d="M2 6h8v8H2zM6 5V2h8v8h-3" stroke="#556" strokeWidth="2.500" /></Ico></PlainButton>
          <PlainButton aria-label="Close chart" $w={6} $h={6}><Ico s={4}><path d="m2 2 12 12M14 2 2 14" stroke="#556" strokeWidth="3" /></Ico></PlainButton>
        </ChildButtons>
      </MenuBar>
      <ToolRow $h={12}>
        <ToolGroup>
          <Grip />
          <Tools items={mainTools} />
          <Grip />
          <Tools items={chartTools} />
        </ToolGroup>
        <ToolEnd>
          <PlainButton aria-label="Search" $w={8}><Ico s={6}><circle cx="10" cy="6" r="4.500" stroke="#2b62d9" strokeWidth="2.500" /><path d="m6 10-5 5" stroke="#2b62d9" strokeWidth="3" /></Ico></PlainButton>
          <PlainButton aria-label="Notifications" $w={9}><Ico s={9}><path d="M0 6h8v7H4l-2 3v-3H0z" fill="#d0d0d0" /><circle cx="10" cy="6" r="6" fill="#e02a14" /><path d="M10 3v6" stroke="#fff" strokeWidth="1.600" /></Ico></PlainButton>
        </ToolEnd>
      </ToolRow>
      <ToolRow $h={11}>
        <ToolGroup>
          <Grip />
          <Tools items={drawTools} />
          <Grip />
          <Frames>
            {['M1', 'M5', 'M15', 'M30', 'H1', 'H4', 'D1', 'W1', 'MN'].map((f) => (
              <Tool key={f} $muted $on={f === 'M5'}>{f}</Tool>
            ))}
          </Frames>
        </ToolGroup>
      </ToolRow>
      <Chart />
      <ChartTabs>
        <ChartTab>EURUSD,M15</ChartTab>
        <ChartTab $active>EURUSD,M5 (visual)</ChartTab>
        <TabArrows>
          <PlainButton aria-label="Scroll tabs left" $w={8} $h={6}><Ico s={3}><path d="M11 1 4 8l7 7z" fill="#555" /></Ico></PlainButton>
          <PlainButton aria-label="Scroll tabs right" $w={8} $h={6}><Ico s={3}><path d="m5 1 7 7-7 7z" fill="#555" /></Ico></PlainButton>
        </TabArrows>
      </ChartTabs>
      <TesterPanel />
      <StatusBar>
        For Help, press F1
        <Spring />
        <StatusCell $w={48}>Default</StatusCell>
        <StatusCell $w={43}>2022.08.22 14:30</StatusCell>
        <StatusCell $w={29}>O: 1.00044</StatusCell>
        <StatusCell $w={30}>H: 1.00051</StatusCell>
        <StatusCell $w={29}>L: 1.00018</StatusCell>
        <StatusCell $w={29}>C: 1.00029</StatusCell>
        <StatusCell $w={26}>V: 427</StatusCell>
        <StatusCell $w={55}>
          <svg width="10" height="6" viewBox="0 0 10 6" aria-hidden="true"><path d="M0 0h10v6H0z" fill="#b9423c" /><path d="M0 0h10L0 4z" fill="#5a9a50" /></svg>
          19598/4 kb
        </StatusCell>
      </StatusBar>
      <Taskbar>
        <Weather>
          <Ico s={10}><circle cx="11" cy="5" r="4.500" fill="#f6a821" /><circle cx="13.500" cy="4" r="2.500" fill="#d8321c" /><path d="M3 14a3 3 0 0 1 0-6 4.500 4.500 0 0 1 8.500 1A2.600 2.600 0 0 1 12 14z" fill="#d5e8fa" stroke="#9cc4ea" /></Ico>
          <Stack>65°F<small>Mostly cloudy</small></Stack>
        </Weather>
        <Dock>
          {dock.map((d) => (
            <DockItem key={d.id} aria-label={d.id} $active={d.active}>{d.icon}</DockItem>
          ))}
        </Dock>
        <Tray>
          <Ico s={6}><path d="m2 11 6-6 6 6" stroke="#333" strokeWidth="2" /></Ico>
          <Ico s={7}><path d="M0 6a12 12 0 0 1 16 0l-8 9z" fill="#777" /><path d="M3 8a8 8 0 0 1 10 0" stroke="#333" strokeWidth="1.500" /></Ico>
          <Ico s={7}><path d="M1 6h3l4-4v12l-4-4H1z" stroke="#444" strokeWidth="1.500" /><path d="M10.500 5a4 4 0 0 1 0 6M13 3a7 7 0 0 1 0 10" stroke="#666" strokeWidth="1.500" /></Ico>
          <Ico s={7}><path d="M1 4h12v8H1z" fill="#333" stroke="#222" strokeWidth="1.500" /><path d="M14 6h2v4h-2z" fill="#222" /><path d="M10 5h2v6h-2z" fill="#ddd" /></Ico>
          <Clock>7:35 AM<br />9/6/2022</Clock>
        </Tray>
      </Taskbar>
    </App_>
  );
}
